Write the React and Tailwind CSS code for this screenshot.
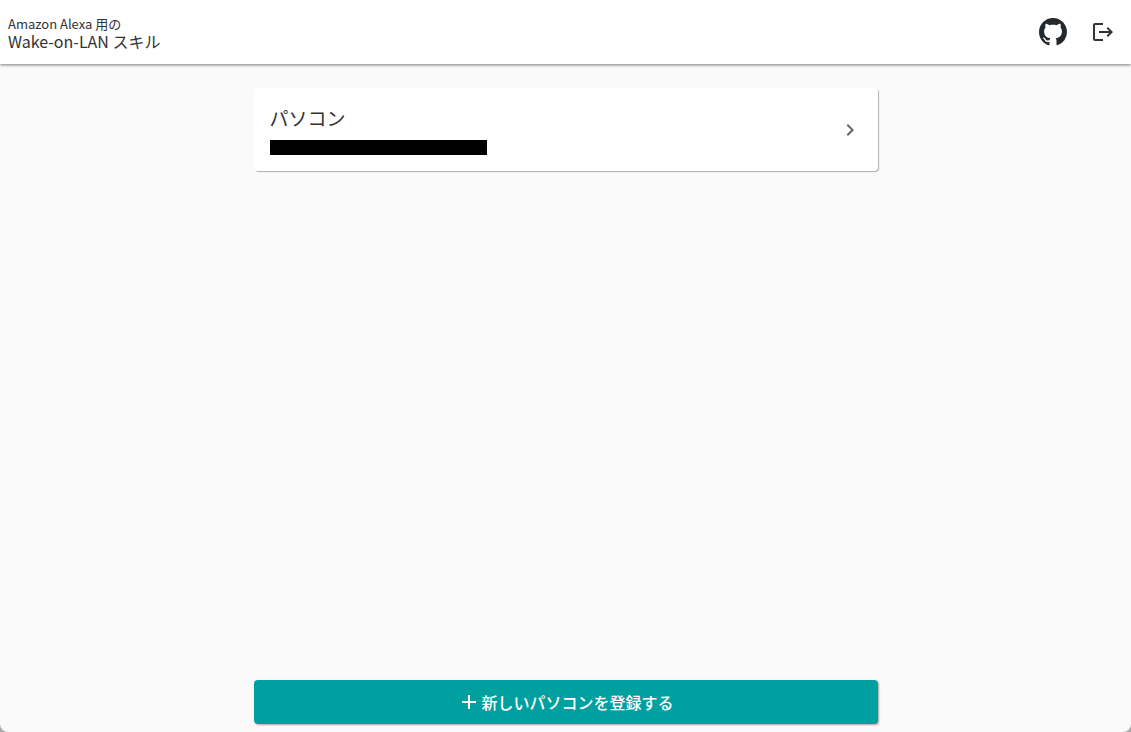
import { MdAdd, MdChevronRight, MdLogout } from 'react-icons/md'

const computers = [{ id: 1, name: 'パソコン' }]

function GitHubMark() {
  return (
    <svg width="28" height="28" viewBox="0 0 16 16" fill="currentColor" aria-hidden="true">
      <path d="M8 0C3.58 0 0 3.58 0 8c0 3.54 2.29 6.53 5.47 7.59.4.07.55-.17.55-.38 0-.19-.01-.82-.01-1.49-2.01.37-2.53-.49-2.69-.94-.09-.23-.48-.94-.82-1.13-.28-.15-.68-.52-.01-.53.63-.01 1.08.58 1.23.82.72 1.21 1.87.87 2.33.66.07-.52.28-.87.51-1.07-1.78-.2-3.64-.89-3.64-3.95 0-.87.31-1.59.82-2.15-.08-.2-.36-1.02.08-2.12 0 0 .67-.21 2.2.82.64-.18 1.32-.27 2-.27s1.36.09 2 .27c1.53-1.04 2.2-.82 2.2-.82.44 1.1.16 1.92.08 2.12.51.56.82 1.27.82 2.15 0 3.07-1.87 3.75-3.65 3.95.29.25.54.73.54 1.48 0 1.07-.01 1.93-.01 2.2 0 .21.15.46.55.38A8.01 8.01 0 0 0 16 8c0-4.42-3.58-8-8-8z" />
    </svg>
  )
}

function Header() {
  return (
    <header className="relative flex h-16 items-center justify-between bg-white px-2 shadow-[0_1px_3px_rgba(0,0,0,0.5)]">
      <h1>
        <span className="block text-[13px] leading-[19px]">Amazon Alexa 用の</span>
        <span className="block text-base leading-[17px]">Wake-on-LAN スキル</span>
      </h1>
      <nav className="flex items-center gap-2">
        <a href="#github" aria-label="GitHub" className="flex h-11 w-11 items-center justify-center text-[#24292e]">
          <GitHubMark />
        </a>
        <button type="button" aria-label="ログアウト" className="flex h-10 w-10 items-center justify-center">
          <MdLogout size={24} />
        </button>
      </nav>
    </header>
  )
}

function ComputerCard({ computer }) {
  return (
    <a
      href="#computer"
      className="flex items-center justify-between rounded bg-white p-4 shadow-[1px_1px_1px_rgba(0,0,0,0.3)]"
    >
      <div>
        <h2 className="text-[19px] leading-7">{computer.name}</h2>
        <div className="mt-2 h-[15px] w-[217px] bg-black" />
      </div>
      <MdChevronRight size={24} className="text-[#666]" />
    </a>
  )
}

export default function App() {
  return (
    <div className="bg-[#aaa]">
      <div className="flex min-h-screen flex-col rounded-b-lg bg-[#fafafa] font-['Noto_Sans_CJK_JP',sans-serif] text-[#333]">
        <Header />
        <main className="mx-auto flex w-full max-w-[640px] flex-1 flex-col justify-between px-2 pt-6 pb-2">
          <ul className="space-y-4">
            {computers.map((c) => (
              <li key={c.id}>
                <ComputerCard computer={c} />
              </li>
            ))}
          </ul>
          <button
            type="button"
            className="flex h-11 items-center justify-center rounded bg-[#00a0a0] text-base font-medium text-white shadow-[1px_1px_2px_rgba(0,0,0,0.35)]"
          >
            <MdAdd size={24} />
            新しいパソコンを登録する
          </button>
        </main>
      </div>
    </div>
  )
}
